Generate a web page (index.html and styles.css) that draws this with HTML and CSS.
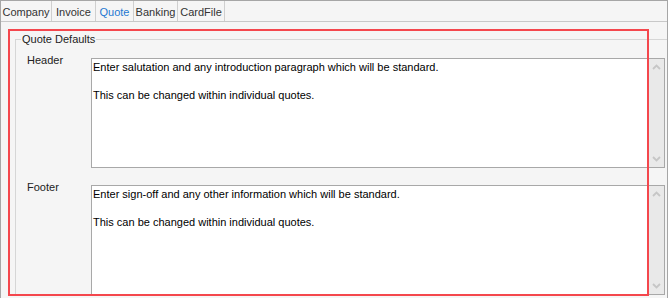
FILE: index.html
```html
<!DOCTYPE html>
<html>
<head>
<meta charset="utf-8">
<link rel="stylesheet" href="styles.css">
</head>
<body>
<div class="window">
  <div class="tabs">
    <div class="tab tab-company">Company</div>
    <div class="tab tab-invoice">Invoice</div>
    <div class="tab tab-quote is-active">Quote</div>
    <div class="tab tab-banking">Banking</div>
    <div class="tab tab-cardfile">CardFile</div>
  </div>
  <div class="page">
    <fieldset class="group">
      <legend class="group-title">Quote Defaults</legend>
      <div class="rows">
        <div class="label">Header</div>
        <div class="memo">
          <div class="memo-text">
            <p>Enter salutation and any introduction paragraph which will be standard.</p>
            <p>This can be changed within individual quotes.</p>
          </div>
          <div class="scrollbar">
            <svg class="chev" width="9" height="6" viewBox="0 0 9 6"><polyline points="1,5 4.5,1.5 8,5" fill="none" stroke="#c6c6c6" stroke-width="1.8"/></svg>
            <svg class="chev" width="9" height="6" viewBox="0 0 9 6"><polyline points="1,1 4.5,4.5 8,1" fill="none" stroke="#c6c6c6" stroke-width="1.8"/></svg>
          </div>
        </div>
        <div class="label">Footer</div>
        <div class="memo">
          <div class="memo-text">
            <p>Enter sign-off and any other information which will be standard.</p>
            <p>This can be changed within individual quotes.</p>
          </div>
          <div class="scrollbar">
            <svg class="chev" width="9" height="6" viewBox="0 0 9 6"><polyline points="1,5 4.5,1.5 8,5" fill="none" stroke="#c6c6c6" stroke-width="1.8"/></svg>
            <svg class="chev" width="9" height="6" viewBox="0 0 9 6"><polyline points="1,1 4.5,4.5 8,1" fill="none" stroke="#c6c6c6" stroke-width="1.8"/></svg>
          </div>
        </div>
      </div>
    </fieldset>
  </div>
  <div class="highlight"></div>
</div>
</body>
</html>
```

FILE: styles.css
```css
* { box-sizing: border-box; }

html, body {
  margin: 0;
  padding: 0;
  background: #f5f5f5;
}

body {
  font-family: "Liberation Sans", Arial, sans-serif;
  font-size: 11px;
  color: #222;
}

.window {
  position: relative;
  width: 668px;
  height: 298px;
  overflow: hidden;
  background: #f5f5f5;
  border-top: 1px solid #a6a6a6;
  border-left: 1px solid #a6a6a6;
  border-right: 1px solid #a6a6a6;
}

.tabs {
  display: flex;
  height: 21px;
  border-bottom: 1px solid #c8c8c8;
}

.tab {
  height: 20px;
  line-height: 23px;
  text-align: center;
  border-right: 1px solid #cfcfcf;
  color: #333;
  white-space: nowrap;
}

.tab-company { width: 51px; }
.tab-invoice { width: 44px; }
.tab-quote { width: 38px; }
.tab-banking { width: 44px; }
.tab-cardfile { width: 47px; }

.tab.is-active {
  color: #1f78d1;
}

.page {
  padding: 10px 0 0 14px;
}

.group {
  margin: 0;
  padding: 12px 2px 0 0;
  border: 1px solid #d6d6d6;
  border-right: none;
  border-bottom: none;
  min-width: 0;
}

.group-title {
  margin-left: 5px;
  padding: 0 1px;
  line-height: 14px;
  color: #222;
}

.rows {
  display: grid;
  grid-template-columns: 64px 574px;
  grid-auto-rows: 110px;
  row-gap: 17px;
  padding-left: 11px;
}

.label {
  margin-top: -5px;
  line-height: 14px;
  color: #222;
}

.memo {
  display: flex;
  height: 110px;
  background: #fff;
  border: 1px solid #a8a8a8;
}

.memo-text {
  flex: 1;
  padding: 1px 0 0 1px;
  line-height: 14px;
  color: #000;
}

.memo-text p {
  margin: 0 0 14px 0;
}

.scrollbar {
  width: 15px;
  background: #e9e9e9;
  display: flex;
  flex-direction: column;
  justify-content: space-between;
  align-items: center;
  padding: 5px 0 5px 0;
}

.chev { display: block; }

.highlight {
  position: absolute;
  left: 7px;
  top: 28px;
  width: 641px;
  height: 267px;
  border: 2px solid #f4474d;
  pointer-events: none;
}
```
